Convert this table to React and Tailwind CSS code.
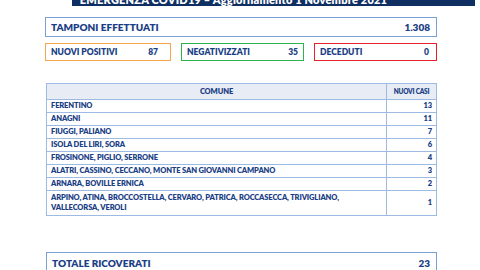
import React from "react";

const rows = [
  ["FERENTINO", "13"],
  ["ANAGNI", "11"],
  ["FIUGGI, PALIANO", "7"],
  ["ISOLA DEL LIRI, SORA", "6"],
  ["FROSINONE, PIGLIO, SERRONE", "4"],
  ["ALATRI, CASSINO, CECCANO, MONTE SAN GIOVANNI CAMPANO", "3"],
  ["ARNARA, BOVILLE ERNICA", "2"],
  ["ARPINO, ATINA, BROCCOSTELLA, CERVARO, PATRICA, ROCCASECCA, TRIVIGLIANO, VALLECORSA, VEROLI", "1"],
];

export default function App() {
  return (
    <div
      className="w-[480px] h-[270px] overflow-hidden bg-white text-[#1b3f86]"
      style={{ fontFamily: "Lato, 'Liberation Sans', sans-serif" }}
    >
      <div className="ml-[72px] w-[403px] h-[16px] -mt-[10px] bg-[#0f2f63] flex items-end justify-center pb-[1px]">
        <span className="text-white font-extrabold text-[11px] leading-[11px] -ml-[80px] tracking-[0.2px]">
          EMERGENZA COVID19 – Aggiornamento 1 Novembre 2021
        </span>
      </div>

      <div className="ml-[45px] w-[392px] mt-[11px] flex flex-col">
        <div className="h-[20px] border-[1.5px] border-[#7b9fd4] flex items-center justify-between pl-[5px] pr-[6px] font-extrabold text-[10px]">
          <span>TAMPONI EFFETTUATI</span>
          <span>1.308</span>
        </div>

        <div className="mt-[6px] flex gap-[10px] font-extrabold text-[8.5px]">
          <div className="w-[126px] h-[18px] border-[1.5px] border-[#f5a54c] flex items-center justify-between pl-[5px] pr-[12px]">
            <span>NUOVI POSITIVI</span>
            <span>87</span>
          </div>
          <div className="w-[123px] h-[18px] border-[1.5px] border-[#2db34a] flex items-center justify-between pl-[5px] pr-[5px]">
            <span>NEGATIVIZZATI</span>
            <span>35</span>
          </div>
          <div className="w-[123px] h-[18px] border-[1.5px] border-[#e52229] flex items-center justify-between pl-[5px] pr-[7px]">
            <span>DECEDUTI</span>
            <span>0</span>
          </div>
        </div>

        <div className="mt-[22px] ml-[1px] w-[391px] border border-[#9dbbe2] font-extrabold text-[7.5px] leading-[10px] tracking-[-0.12px]">
          <div className="flex h-[16px] bg-[#e8edf5] border-b border-[#9dbbe2]">
            <div className="flex-1 flex items-center justify-center">COMUNE</div>
            <div className="w-[50px] border-l border-[#9dbbe2] flex items-center justify-center text-[6.5px] tracking-[-0.2px]">
              NUOVI CASI
            </div>
          </div>
          {rows.map(([c, n], i) => (
            <div
              key={i}
              className={`flex ${i === rows.length - 1 ? "h-[24px]" : "h-[13px] border-b border-[#9dbbe2]"}`}
            >
              <div className="flex-1 flex items-center pl-[4px] pr-[28px]">{c}</div>
              <div className="w-[50px] border-l border-[#9dbbe2] flex items-center justify-end pr-[4px]">
                {n}
              </div>
            </div>
          ))}
        </div>

        <div className="mt-[36px] ml-[1px] w-[391px] h-[24px] border-[1.5px] border-[#7b9fd4] flex items-start justify-between pl-[5px] pr-[6px] pt-[3px] font-extrabold text-[10px]">
          <span>TOTALE RICOVERATI</span>
          <span>23</span>
        </div>
      </div>
    </div>
  );
}
